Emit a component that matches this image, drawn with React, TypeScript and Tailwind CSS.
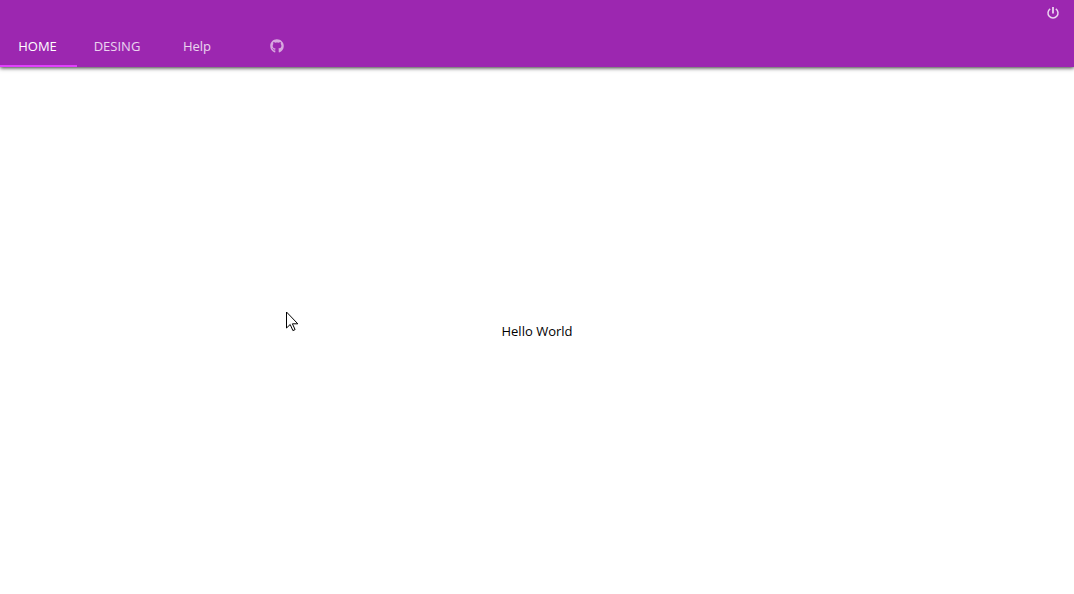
import { FaGithub } from "react-icons/fa";

function PowerIcon() {
  return (
    <svg width="14" height="14" viewBox="0 0 14 14" fill="none" stroke="currentColor" aria-hidden="true">
      <path d="M4.2 2.9a5 5 0 1 0 5.6 0" strokeWidth="1.5" />
      <path d="M7 1v6.5" strokeWidth="1.8" />
    </svg>
  );
}

export default function App() {
  return (
    <div className="flex min-h-screen flex-col bg-white font-['Open_Sans','Noto_Sans',sans-serif] text-[13px] leading-5">
      <header className="bg-[#9c27b0] text-white shadow-[0_1px_4px_rgba(0,0,0,0.8)]">
        <div className="flex h-[27px] items-center justify-end px-3.5 pb-0.5">
          <button type="button" aria-label="Exit" className="text-white/80">
            <PowerIcon />
          </button>
        </div>
        <nav className="flex h-10" role="tablist">
          <button type="button" role="tab" aria-selected="true" className="w-[77px] border-b-2 border-[#e040fb] pr-0.5">HOME</button>
          <button type="button" role="tab" aria-selected="false" className="w-20 border-b-2 border-transparent text-white/80">DESING</button>
          <button type="button" role="tab" aria-selected="false" className="w-20 border-b-2 border-transparent text-white/80">Help</button>
          <button type="button" role="tab" aria-selected="false" aria-label="GitHub" className="flex w-20 items-center justify-center border-b-2 border-transparent text-white/60">
            <FaGithub size={14} />
          </button>
        </nav>
      </header>
      <main className="flex grow items-center justify-center text-black">
        <p>Hello World</p>
      </main>
      <svg className="pointer-events-none absolute left-[286px] top-[311px]" width="13" height="21" viewBox="0 0 13 21" aria-hidden="true">
        <path d="M.5 1v16l3.7-3.5 2.7 6.1 2.2-1-2.7-5.8h5.4z" fill="#fff" stroke="#000" strokeWidth="1" />
      </svg>
    </div>
  );
}
